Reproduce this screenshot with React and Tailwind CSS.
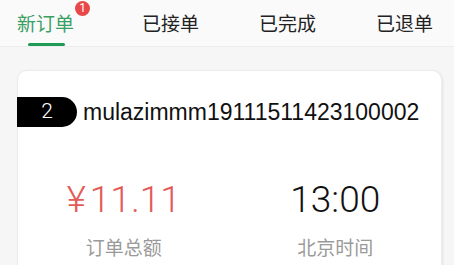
const tabs = ["新订单", "已接单", "已完成", "已退单"]

const App = () => {
  const cjk = { fontFamily: '"Noto Sans CJK SC", "Liberation Sans", sans-serif' }
  const thin = { fontFamily: 'Roboto, "Liberation Sans", sans-serif' }
  return (
    <div className="w-[454px] h-[265px] overflow-hidden bg-[#f6f6f6]" style={cjk}>
      {/* tabs */}
      <div className="h-[47px] bg-[#fafafa] border-b border-[#ececec] flex items-start pl-[17px]">
        <div className="relative h-full flex flex-col items-center">
          <span className="text-[19px] leading-[19px] mt-[13px] text-[#3a9f63]">{tabs[0]}</span>
          <span className="absolute left-[58px] top-[1px] w-[15px] h-[15px] rounded-full bg-[#e84848] text-white text-[12px] leading-[15px] text-center" style={thin}>1</span>
          <span className="absolute left-[11px] top-[43px] w-[37px] h-[3px] rounded-full bg-[#1f9a57]"></span>
        </div>
        <span className="ml-[68px] text-[19px] leading-[19px] mt-[13px] text-[#222]">{tabs[1]}</span>
        <span className="ml-[60px] text-[19px] leading-[19px] mt-[13px] text-[#222]">{tabs[2]}</span>
        <span className="ml-[60px] text-[19px] leading-[19px] mt-[13px] text-[#222]">{tabs[3]}</span>
      </div>

      {/* card */}
      <div className="px-[17px] pr-[12px] pt-[23px]">
        <div className="bg-white rounded-[10px] border border-[#ececec] shadow-[1px_1px_3px_rgba(0,0,0,0.08)] h-[220px] pt-[26px]">
          <div className="flex items-center h-[30px] -ml-px">
            <span className="w-[60px] h-[30px] bg-black text-white rounded-r-full flex items-center justify-center text-[21px] font-light" style={thin}>2</span>
            <span className="ml-[6px] text-[23px] text-[#111]" style={{ fontFamily: '"Liberation Sans", sans-serif' }}>mulazimmm19111511423100002</span>
          </div>
          <div className="grid grid-cols-2 mt-[55px]">
            <div className="flex flex-col items-center">
              <span className="text-[37px] leading-[36px] font-light text-[#e35a58] flex" style={thin}>
                <span className="mr-[4px]">¥</span>11.11
              </span>
              <span className="mt-[19px] text-[19px] leading-[20px] text-[#9a9a9a]">订单总额</span>
            </div>
            <div className="flex flex-col items-center">
              <span className="text-[37px] leading-[36px] font-light text-[#111]" style={thin}>13:00</span>
              <span className="mt-[19px] text-[19px] leading-[20px] text-[#9a9a9a]">北京时间</span>
            </div>
          </div>
        </div>
      </div>
    </div>
  )
}

export default App
